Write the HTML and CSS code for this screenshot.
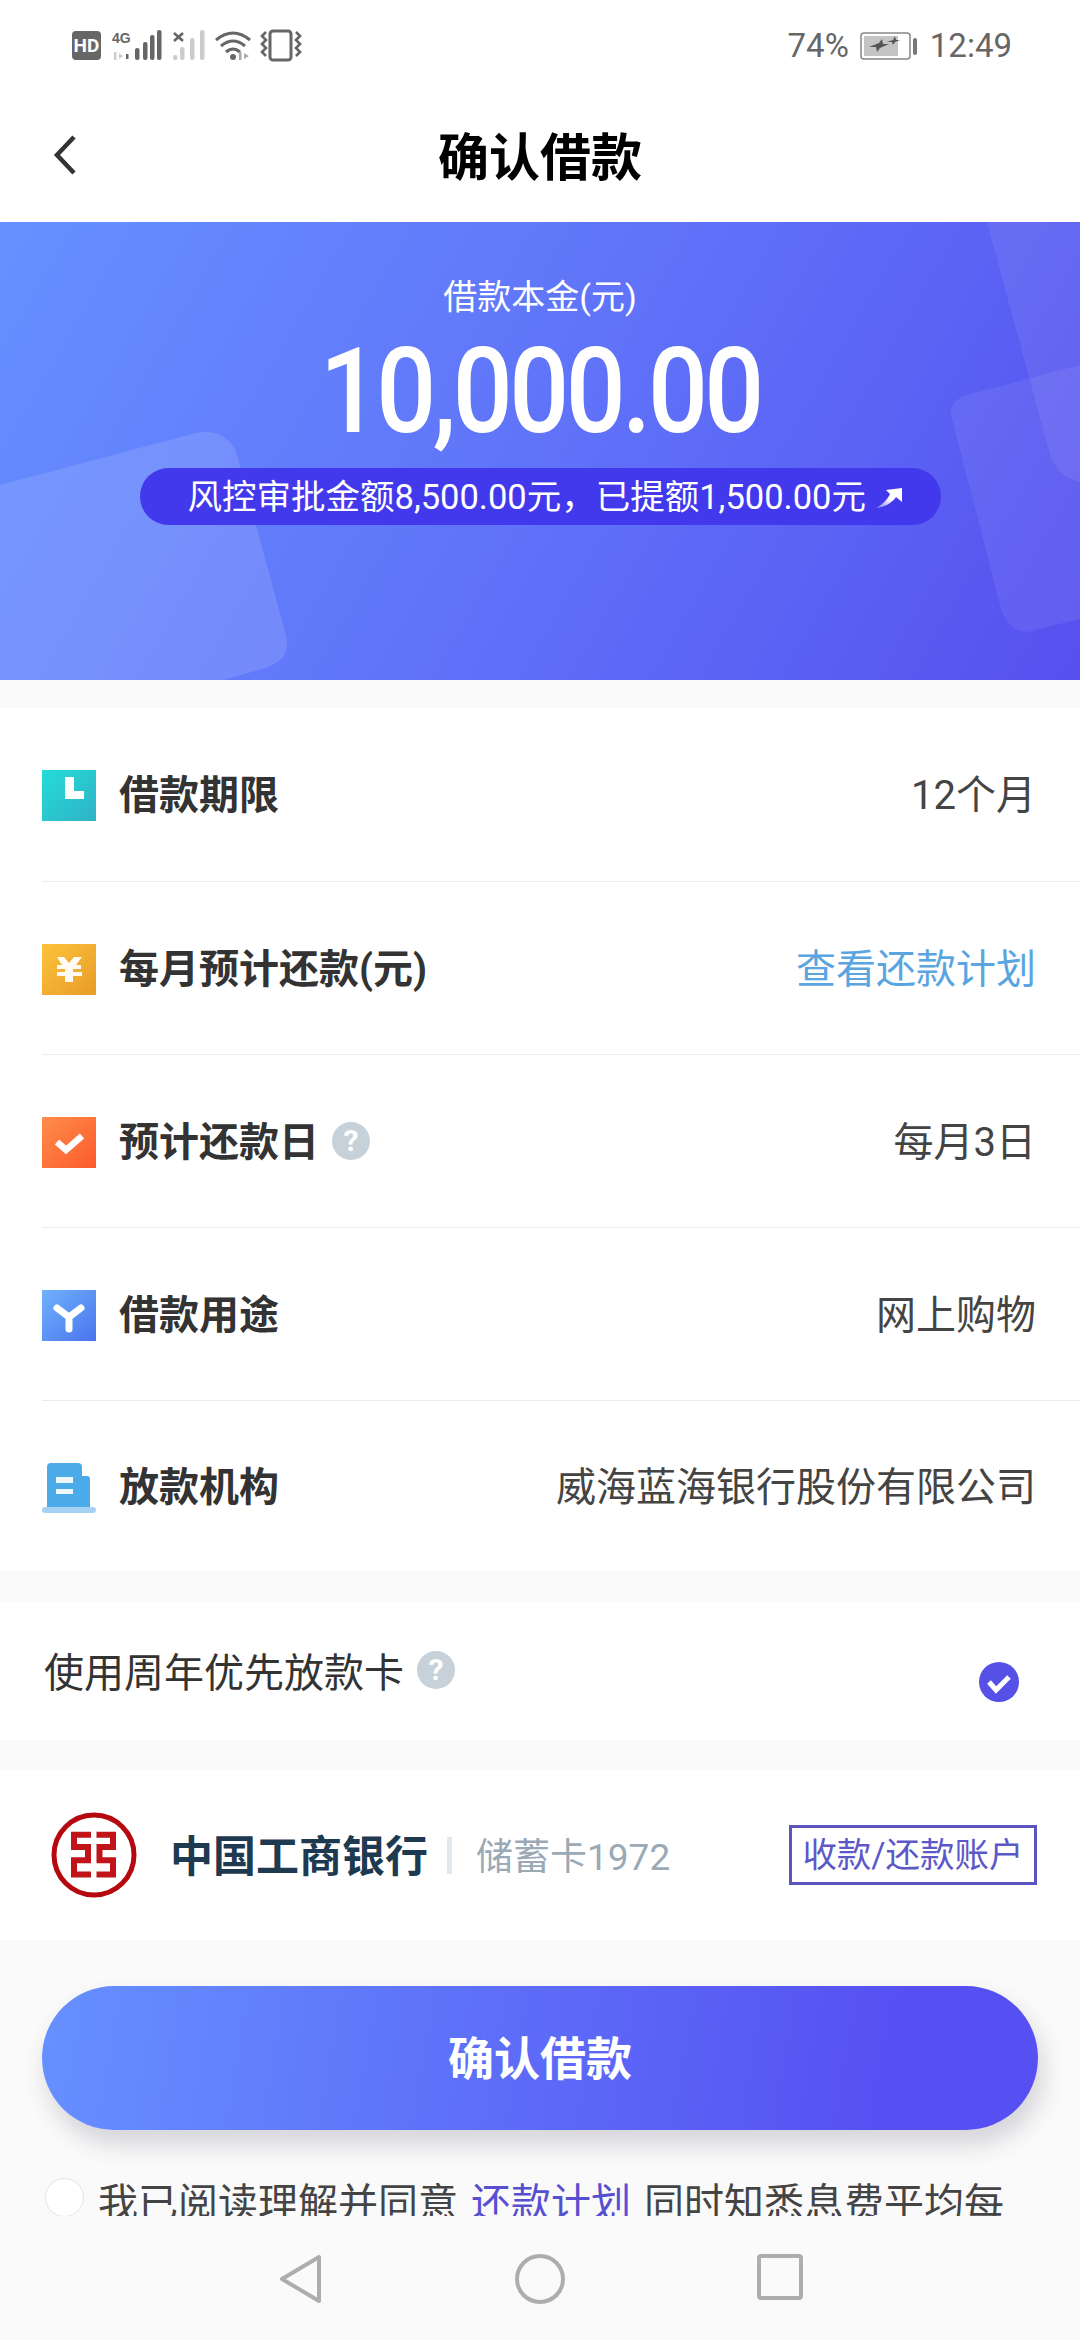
FILE: index.html

```html
<!DOCTYPE html>
<html lang="zh-CN">
<head>
  <meta charset="UTF-8">
  <title>确认借款</title>
  <link rel="stylesheet" href="styles.css">
</head>
<body>
  <div class="phone">
    <div class="statusbar">
      <svg class="status-icons" width="232" height="34" viewBox="0 0 232 34">
        <rect x="1" y="2" width="29" height="29" rx="4" fill="#666"/>
        <text x="15.5" y="23" text-anchor="middle" class="hd-text">HD</text>
        <text x="41" y="14" class="net-text">4G</text>
        <path d="M43 23h2.5v8H43zM48 24l4 3-4 3z" fill="#ccc"/>
        <path d="M55 25h2.5v5H55z" fill="#666"/>
        <g fill="#666">
          <rect x="64" y="19" width="4.5" height="12" rx="2"/>
          <rect x="72" y="13" width="4.5" height="18" rx="2"/>
          <rect x="79" y="6" width="4.5" height="25" rx="2"/>
          <rect x="86" y="1" width="4.5" height="30" rx="2"/>
        </g>
        <path d="M103 4l9 8M112 4l-9 8" stroke="#666" stroke-width="2.6"/>
        <g fill="#ccc">
          <rect x="102" y="26" width="4.5" height="5" rx="2"/>
          <rect x="109" y="18" width="4.5" height="13" rx="2"/>
          <rect x="119" y="9" width="4.5" height="22" rx="2"/>
          <rect x="129" y="1" width="4.5" height="30" rx="2"/>
        </g>
        <g fill="none" stroke="#666" stroke-width="3">
          <path d="M145 11Q162-3 179 11"/>
          <path d="M150 17Q162 7 174 17"/>
          <path d="M155 23Q162 17 169 23"/>
        </g>
        <circle cx="162" cy="28" r="3" fill="#666"/>
        <path d="M168 23h2.5v8H168zM173 24l5 3-5 3z" fill="#aaa"/>
        <rect x="199" y="2" width="21" height="29" rx="3" fill="none" stroke="#666" stroke-width="3"/>
        <path d="M195 3l-4 4 4 4-4 4 4 4-4 4 4 4 M225 3l4 4-4 4 4 4-4 4 4 4-4 4" fill="none" stroke="#666" stroke-width="2.6"/>
      </svg>
      <div class="status-right">
        <span>74%</span>
        <svg class="battery" width="57" height="28" viewBox="0 0 57 28">
          <rect x="1" y="1" width="49" height="26" rx="3" fill="#fff" stroke="#888" stroke-width="1.5"/>
          <rect x="4" y="4" width="34" height="20" fill="#c4c4c4"/>
          <path d="M9 15l10-4 3-4 1 5 6 0-9 4-3 4-1-5zM27 10l6-2 2-4 1 4 4 0-5 2-2 3-1-3z" fill="#555"/>
          <rect x="53" y="6" width="4" height="17" rx="2" fill="#777"/>
        </svg>
        <span>12:49</span>
      </div>
    </div>

    <div class="appbar">
      <svg class="back" width="26" height="42" viewBox="0 0 26 42">
        <path d="M22 3L5 21l17 18" fill="none" stroke="#333" stroke-width="4.5"/>
      </svg>
      <h1>确认借款</h1>
    </div>

    <div class="content">
      <section class="hero">
        <svg class="hero-bg" width="1080" height="458" viewBox="0 0 1080 458">
          <path d="M0 263L192 212c23-6 40 2 46 24l47 174c6 20-1 30-23 37l-39 11H0z" fill="#fff" fill-opacity=".12"/>
          <path d="M1080 143L967 173c-13 4-19 13-15 24l48 186c5 18 14 27 27 27l53-13z" fill="#fff" fill-opacity=".07"/>
          <path d="M987 0l63 233c5 14 14 23 30 27V0z" fill="#fff" fill-opacity=".07"/>
        </svg>
        <div class="hero-label">借款本金(元)</div>
        <div class="hero-amount">10,000.00</div>
        <div class="hero-pill">
          <span>风控审批金额8,500.00元，已提额1,500.00元</span>
          <svg class="pill-arrow" width="27" height="22" viewBox="0 0 27 22">
            <defs><linearGradient id="gArrow" x1="0" y1="1" x2="1" y2="0"><stop offset="0" stop-color="#fff" stop-opacity=".3"/><stop offset=".5" stop-color="#fff"/></linearGradient></defs>
            <path d="M26 1v14l-6-5C16 16 9 20 0 21 7 17 11 13 14 7l-4-4z" fill="url(#gArrow)"/>
          </svg>
        </div>
      </section>

      <section class="list">
        <div class="row">
          <div class="row-label">
            <svg class="row-icon" width="54" height="51" viewBox="0 0 54 51">
              <defs><linearGradient id="gTeal" x1="0" y1="0" x2="1" y2="1"><stop offset="0" stop-color="#24dcd8"/><stop offset="1" stop-color="#30b2c6"/></linearGradient></defs>
              <rect width="54" height="51" fill="url(#gTeal)"/>
              <path d="M23 7h9v14h10v8H23z" fill="#fff"/>
            </svg>
            <span>借款期限</span>
          </div>
          <div class="row-value">12个月</div>
        </div>
        <div class="row">
          <div class="row-label">
            <svg class="row-icon" width="54" height="51" viewBox="0 0 54 51">
              <defs><linearGradient id="gGold" x1="0" y1="0" x2="1" y2="1"><stop offset="0" stop-color="#fcc23a"/><stop offset="1" stop-color="#e89c2a"/></linearGradient></defs>
              <rect width="54" height="51" fill="url(#gGold)"/>
              <path d="M15 13h7l5 6 5-6h8l-6 8h5v4H31v3h9v4h-9v6h-8v-6h-8v-4h8v-3h-8v-4h5z" fill="#fff" fill-opacity=".95"/>
            </svg>
            <span>每月预计还款(元)</span>
          </div>
          <div class="row-value row-link">查看还款计划</div>
        </div>
        <div class="row">
          <div class="row-label">
            <svg class="row-icon" width="54" height="51" viewBox="0 0 54 51">
              <defs><linearGradient id="gOrange" x1="0" y1="0" x2="1" y2="1"><stop offset="0" stop-color="#fe8d4a"/><stop offset="1" stop-color="#fd5a2c"/></linearGradient></defs>
              <rect width="54" height="51" fill="url(#gOrange)"/>
              <path d="M15 25l9 8 16-14" fill="none" stroke="#fff" stroke-width="6.5"/>
            </svg>
            <span>预计还款日</span>
            <span class="help">?</span>
          </div>
          <div class="row-value">每月3日</div>
        </div>
        <div class="row">
          <div class="row-label">
            <svg class="row-icon" width="54" height="51" viewBox="0 0 54 51">
              <defs><linearGradient id="gBlue" x1="0" y1="0" x2="1" y2="1"><stop offset="0" stop-color="#6fb2fb"/><stop offset="1" stop-color="#4a74ee"/></linearGradient></defs>
              <rect width="54" height="51" fill="url(#gBlue)"/>
              <path d="M15 18l12 9 12-9M27 27v12" fill="none" stroke="#fff" stroke-width="7" stroke-linecap="round"/>
            </svg>
            <span>借款用途</span>
          </div>
          <div class="row-value">网上购物</div>
        </div>
        <div class="row">
          <div class="row-label">
            <svg class="row-icon" width="54" height="51" viewBox="0 0 54 51">
              <path d="M5 5a4 4 0 0 1 4-4h27a4 4 0 0 1 4 4v9h5a3 3 0 0 1 3 3v29H5z" fill="#4aabe8"/>
              <path d="M14 15h17v6H14zM14 27h17v5H14z" fill="#fff" fill-opacity=".9"/>
              <rect y="45" width="54" height="6" rx="3" fill="#a5d2f2"/>
            </svg>
            <span>放款机构</span>
          </div>
          <div class="row-value">威海蓝海银行股份有限公司</div>
        </div>
      </section>

      <section class="priority">
        <div class="priority-label">
          <span>使用周年优先放款卡</span>
          <span class="help">?</span>
        </div>
        <svg class="checked" width="42" height="40" viewBox="0 0 42 40">
          <circle cx="21" cy="20" r="20" fill="#5650e6"/>
          <path d="M11 20l7 8 13-13" fill="none" stroke="#fff" stroke-width="5"/>
        </svg>
      </section>

      <section class="bank">
        <svg class="bank-logo" width="86" height="86" viewBox="0 0 86 86">
          <circle cx="43" cy="43" r="40" fill="none" stroke="#b5090f" stroke-width="5"/>
          <g fill="none" stroke="#c0141a" stroke-width="6">
            <path d="M40 22.7H23V35H37V48.3H23V62.5H40"/>
            <path d="M45.5 22.7H62V35H48.5V48.3H62V62.5H45.5"/>
          </g>
        </svg>
        <span class="bank-name">中国工商银行</span>
        <span class="bank-sep"></span>
        <span class="bank-card">储蓄卡1972</span>
        <span class="bank-tag">收款/还款账户</span>
      </section>

      <button class="confirm">确认借款</button>

      <div class="agree">
        <span class="radio"></span>
        <p>我已阅读理解并同意<a class="agree-link">还款计划</a>同时知悉息费平均每</p>
      </div>
    </div>

    <div class="navbar">
      <svg width="44" height="50" viewBox="0 0 44 50"><path d="M40 3v44L3 25z" fill="none" stroke="#adadad" stroke-width="4" stroke-linejoin="round"/></svg>
      <svg width="50" height="50" viewBox="0 0 50 50"><circle cx="25" cy="25" r="23" fill="none" stroke="#adadad" stroke-width="4"/></svg>
      <svg width="46" height="46" viewBox="0 0 46 46"><rect x="2" y="2" width="42" height="42" rx="2" fill="none" stroke="#adadad" stroke-width="4"/></svg>
    </div>
  </div>
</body>
</html>
```

FILE: styles.css

```css
* {
  box-sizing: border-box;
}
body {
  margin: 0;
  background-color: #fafafa;
  font-family: Roboto, "Noto Sans CJK SC", sans-serif;
  color: #333;
}
.phone {
  width: 1080px;
  height: 2340px;
  display: flex;
  flex-direction: column;
  overflow: hidden;
}

/* status bar */
.statusbar {
  height: 90px;
  padding: 29px 68px 0 71px;
  display: flex;
  justify-content: space-between;
  align-items: flex-start;
  background-color: #fff;
}
.status-icons {
  display: block;
}
.hd-text {
  font: 700 19px Roboto, sans-serif;
  fill: #fff;
}
.net-text {
  font: 700 14px "Liberation Sans", sans-serif;
  fill: #666;
}
.status-right {
  display: flex;
  align-items: center;
  gap: 11px;
  font-size: 33px;
  color: #666;
  line-height: 34px;
}
.battery {
  margin-right: 2px;
}

/* title */
.appbar {
  height: 132px;
  position: relative;
  display: flex;
  align-items: center;
  justify-content: center;
  background-color: #fff;
}
.appbar h1 {
  margin: 0 0 4px;
  font-size: 51px;
  font-weight: 700;
  color: #000;
}
.back {
  position: absolute;
  left: 52px;
  top: 44px;
}

.content {
  flex: 1;
  min-height: 0;
  overflow: hidden;
}

/* hero */
.hero {
  position: relative;
  height: 458px;
  padding-top: 50px;
  background: linear-gradient(120deg, #6690ff 0%, #5f70f8 55%, #5650ef 100%);
  color: #fff;
  display: flex;
  flex-direction: column;
  align-items: center;
  overflow: hidden;
}
.hero-bg {
  position: absolute;
  left: 0;
  top: 0;
}
.hero-label,
.hero-amount,
.hero-pill {
  position: relative;
}
.hero-label {
  font-size: 34px;
  line-height: 50px;
}
.hero-amount {
  margin-top: 2px;
  margin-bottom: 4px;
  font-size: 118px;
  font-weight: 500;
  line-height: 136px;
  letter-spacing: -4px;
  transform: scaleX(0.895);
}
.hero-pill {
  width: 801px;
  height: 57px;
  margin-top: 4px;
  padding-left: 48px;
  display: flex;
  align-items: center;
  gap: 10px;
  font-size: 34.5px;
  border-radius: 29px;
  background-color: #4339ec;
}
.hero-pill span {
  margin-bottom: 6px;
}
.pill-arrow {
  display: block;
  margin-top: 3px;
}

/* detail rows */
.list {
  margin-top: 28px;
  padding-left: 42px;
  background-color: #fff;
}
.row {
  height: 173px;
  padding-right: 44px;
  display: flex;
  align-items: center;
  justify-content: space-between;
  border-bottom: 1px solid #ececec;
}
.row:first-child {
  height: 174px;
}
.row:last-child {
  height: 170px;
  border-bottom: none;
}
.row-label {
  display: flex;
  align-items: center;
  font-size: 40px;
  font-weight: 700;
  color: #333;
}
.row-label span,
.row-value {
  margin-bottom: 5px;
}
.row-icon {
  display: block;
  margin: 2px 23px 0 0;
}
.row-value {
  font-size: 40px;
  color: #444;
}
.row-link {
  color: #5aa5e0;
}
.row-label .help {
  margin-bottom: 0;
}
.help {
  width: 38px;
  height: 38px;
  margin-left: 13px;
  border-radius: 50%;
  background-color: #c6d1d9;
  color: #fff;
  font-size: 30px;
  font-weight: 700;
  line-height: 38px;
  text-align: center;
}

/* priority card */
.priority {
  height: 138px;
  margin-top: 31px;
  padding: 0 60px 0 44px;
  display: flex;
  justify-content: space-between;
  background-color: #fff;
}
.priority-label {
  height: 100px;
  margin-top: 18px;
  display: flex;
  align-items: center;
  font-size: 40px;
  color: #333;
}
.checked {
  display: block;
  margin-top: 60px;
}

/* bank card */
.bank {
  height: 170px;
  margin-top: 30px;
  padding: 0 43px 0 51px;
  display: flex;
  align-items: center;
  background-color: #fff;
}
.bank-logo {
  display: block;
  margin-right: 33px;
}
.bank-name {
  margin-bottom: 5px;
  font-size: 43px;
  font-weight: 700;
  color: #1e3a50;
}
.bank-sep {
  width: 5px;
  height: 37px;
  margin: 0 24px 0 19px;
  background-color: #e3e8ec;
}
.bank-card {
  margin-bottom: 3px;
  font-size: 37px;
  color: #9aa9b5;
}
.bank-tag {
  margin-left: auto;
  width: 248px;
  height: 60px;
  border: 3px solid #5a55c0;
  color: #5d58c8;
  font-size: 34.5px;
  line-height: 55px;
  text-align: center;
  white-space: nowrap;
}

/* confirm button */
.confirm {
  display: block;
  width: 996px;
  height: 144px;
  margin: 46px 0 0 42px;
  padding: 0 0 6px;
  border: none;
  border-radius: 72px;
  background: linear-gradient(100deg, #6690ff 0%, #5650f2 85%);
  box-shadow: 5px 14px 24px rgba(60, 60, 90, 0.2);
  color: #fff;
  font-family: inherit;
  font-size: 46px;
  font-weight: 700;
}

/* agreement, cut by the nav bar */
.agree {
  margin-top: 48px;
  padding-left: 45px;
  display: flex;
  align-items: flex-start;
}
.radio {
  width: 39px;
  height: 39px;
  border: 1px solid #e4e4e4;
  border-radius: 50%;
  background-color: #fff;
  flex-shrink: 0;
}
.agree p {
  margin: 0 0 0 14px;
  font-size: 40px;
  line-height: 52px;
  color: #444;
  white-space: nowrap;
}
.agree-link {
  margin: 0 13px;
  color: #5650d0;
}

/* android nav bar */
.navbar {
  height: 124px;
  padding: 38px 0 0 279px;
  display: flex;
  align-items: flex-start;
  gap: 192px;
  background-color: #fafafa;
}
.navbar svg {
  display: block;
}
```
